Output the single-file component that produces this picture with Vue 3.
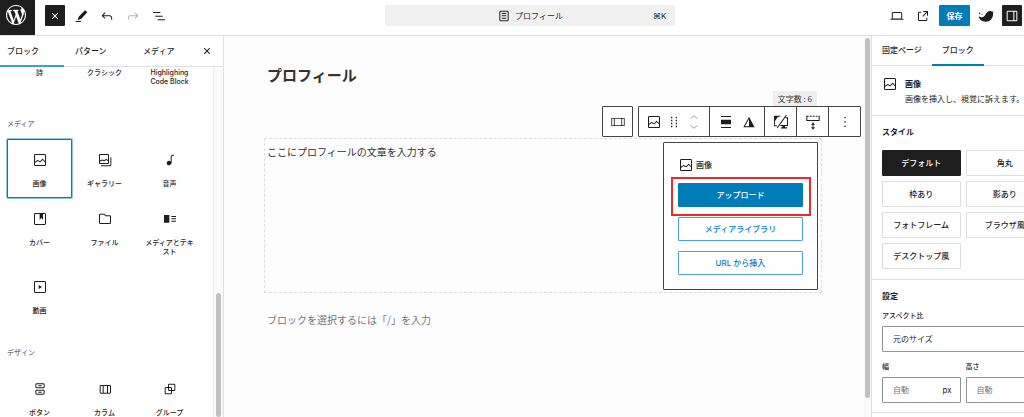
<script setup>
import { h, ref } from "vue";

const icons = {
  close: "M12 13.06l3.712 3.713 1.061-1.06L13.061 12l3.712-3.712-1.06-1.06L12 10.938 8.288 7.227l-1.061 1.06L10.939 12l-3.712 3.712 1.06 1.061L12 13.061z",
  pencil: "M18 3.500l3.500 2.800L12.500 16 7 18.500 8.500 13 18 3.500zM4 19.500h8V21H4v-1.500z",
  undo: "M18.3 11.7c-.6-.6-1.4-.9-2.3-.9H6.7l2.9-3.3-1.1-1-4.5 5L8.5 16l1-1-2.7-2.7H16c.5 0 .9.2 1.3.5 1 1 1 3.4 1 4.5v.3h1.5v-.2c0-1.5 0-4.3-1.5-5.7z",
  redo: "M15.6 6.5l-1.1 1 2.9 3.3H8c-.9 0-1.7.3-2.3.9-1.4 1.5-1.4 4.2-1.4 5.6v.2h1.5v-.3c0-1.1 0-3.5 1-4.5.3-.3.7-.5 1.3-.5h9.2L14.5 15l1.1 1.1 4.6-4.6-4.6-5z",
  listView: "M3 6h11v1.5H3V6Zm3.5 5.5h11V13h-11v-1.5ZM21 17H10v1.5h11V17Z",
  page: "M15.5 7.5h-7V9h7V7.5Zm-7 3.5h7v1.5h-7V11Zm7 3.5h-7V16h7v-1.5Z M17 4H7a2 2 0 0 0-2 2v12a2 2 0 0 0 2 2h10a2 2 0 0 0 2-2V6a2 2 0 0 0-2-2ZM7 5.5h10a.5.5 0 0 1 .5.5v12a.5.5 0 0 1-.5.5H7a.5.5 0 0 1-.5-.5V6a.5.5 0 0 1 .5-.5Z",
  desktop: "M20.5 16h-.7V8c0-1.1-.9-2-2-2H6.2c-1.1 0-2 .9-2 2v8h-.7c-.8 0-1.5.7-1.5 1.5h20c0-.8-.7-1.5-1.5-1.5zM5.7 8c0-.3.2-.5.5-.5h11.6c.3 0 .5.2.5.5v7.6H5.7V8z",
  external: "M19.5 4.5h-7V6h4.44l-5.97 5.97 1.06 1.06L18 7.06v4.44h1.5v-7Zm-13 1a2 2 0 0 0-2 2v10a2 2 0 0 0 2 2h10a2 2 0 0 0 2-2v-3H17v3a.5.5 0 0 1-.5.5h-10a.5.5 0 0 1-.5-.5v-10a.5.5 0 0 1 .5-.5h3V5.5h-3Z",
  bird: "M1.200 8a1.200 1.200 0 1 0 2.400 0a1.200 1.200 0 1 0-2.400 0zM5.200 9.500a.8.8 0 1 0 1.600 0a.8.8 0 1 0-1.600 0zM1 12.500c3 2 6.500 2 8.800-.5C12 9.500 13 5.500 17.500 4.500c1.600-.3 3 .1 4 1l2-.8c-1 1.200-.9 2.300-.9 3.800 0 7-4.600 12-11 12C6 20.500 2 17.500 1 12.500z",
  drawer: "M18 4H6c-1.1 0-2 .9-2 2v12c0 1.1.9 2 2 2h12c1.1 0 2-.9 2-2V6c0-1.1-.9-2-2-2zm-4 14.5H6c-.3 0-.5-.2-.5-.5V6c0-.3.2-.5.5-.5h8v13zm4.500-.5c0 .3-.2.5-.5.5h-2.500v-13H18c.3 0 .5.2.5.5v12z",
  image: "M19 3H5c-1.100 0-2 .9-2 2v14c0 1.100.9 2 2 2h14c1.100 0 2-.9 2-2V5c0-1.100-.9-2-2-2zM5 4.500h14c.3 0 .5.2.5.5v8.400l-3-2.900c-.3-.3-.8-.3-1 0L11.900 14 9 12c-.3-.2-.6-.2-.8 0l-3.600 2.600V5c-.1-.3.1-.5.4-.5zm14 15H5c-.3 0-.5-.2-.5-.5v-2.400l4.100-3 3 1.900c.3.2.7.2.9-.1L16 12l3.500 3.400V19c0 .3-.2.5-.5.5z",
  gallery: "M16.375 4.5H4.625a.125.125 0 0 0-.125.125v8.254l2.859-1.540a.75.75 0 0 1 .68-.016l2.384 1.142 2.890-2.074a.75.75 0 0 1 .874 0l2.313 1.660V4.625a.125.125 0 0 0-.125-.125Zm.125 9.398-2.750-1.975-2.813 2.020a.75.75 0 0 1-.76.067l-2.444-1.170L4.500 14.583v1.792c0 .069.056.125.125.125h11.750a.125.125 0 0 0 .125-.125v-2.477ZM4.625 3C3.728 3 3 3.728 3 4.625v11.750C3 17.273 3.728 18 4.625 18h11.750c.898 0 1.625-.727 1.625-1.625V4.625C18 3.728 17.273 3 16.375 3H4.625ZM20 8v11c0 .69-.31 1-.999 1H6v1.500h13.001c1.520 0 2.499-.982 2.499-2.500V8H20Z",
  audio: "M17.7 4.3c-1.2 0-2.8 0-3.8 1-.6.6-.9 1.500-.9 2.600V14c-.6-.6-1.500-1-2.500-1C8.600 13 7 14.600 7 16.500S8.600 20 10.500 20c1.500 0 2.800-1 3.300-2.300.5-.8.7-1.800.7-2.500V7.900c0-.7.2-1.200.5-1.600.6-.6 1.800-.6 2.800-.6h.3V4.300h-.4z",
  cover: "M18.7 3H5.300C4 3 3 4 3 5.300v13.400C3 20 4 21 5.300 21h13.400c1.300 0 2.300-1 2.300-2.300V5.300C21 4 20 3 18.700 3zm.8 15.700c0 .4-.4.8-.8.8H5.300c-.4 0-.8-.4-.8-.8V5.300c0-.4.4-.8.8-.8h6.200v8.900l2.500-3.100 2.500 3.100V4.500h2.200c.4 0 .8.4.8.8v13.400z",
  file: "M12.848 8a1 1 0 0 1-.914-.594l-.723-1.630a.5.5 0 0 0-.447-.276H5a.5.5 0 0 0-.5.5v11.500a.5.5 0 0 0 .5.5h14a.5.5 0 0 0 .5-.5v-9A.5.5 0 0 0 19 8h-6.152Zm.612-1.500a.5.5 0 0 1-.462-.310l-.445-1.084A2 2 0 0 0 10.763 4H5a2 2 0 0 0-2 2v11.500a2 2 0 0 0 2 2h14a2 2 0 0 0 2-2v-9a2 2 0 0 0-2-2h-5.540Z",
  mediaText: "M3 6v11.500h8V6H3Zm11 3h7V7.500h-7V9Zm7 3.500h-7V11h7v1.500ZM14 16h7v-1.500h-7V16Z",
  video: "M18.7 3H5.300C4 3 3 4 3 5.300v13.400C3 20 4 21 5.300 21h13.400c1.300 0 2.300-1 2.300-2.300V5.300C21 4 20 3 18.700 3zm.8 15.700c0 .4-.4.8-.8.8H5.300c-.4 0-.8-.4-.8-.8V5.300c0-.4.4-.8.8-.8h13.400c.4 0 .8.4.8.8v13.400zM10 15l5-3-5-3v6z",
  buttons: "M14.5 17.5h-5V16h5v1.500zM14.500 8h-5V6.500h5V8zM7 3.500h10a2 2 0 0 1 2 2V9a2 2 0 0 1-2 2H7a2 2 0 0 1-2-2V5.500a2 2 0 0 1 2-2zM17 5H7a.5.5 0 0 0-.5.5V9a.5.5 0 0 0 .5.5h10a.5.5 0 0 0 .5-.5V5.500A.5.5 0 0 0 17 5zM7 13h10a2 2 0 0 1 2 2v3.500a2 2 0 0 1-2 2H7a2 2 0 0 1-2-2V15a2 2 0 0 1 2-2zM17 14.500H7a.5.5 0 0 0-.5.5v3.500a.5.5 0 0 0 .5.5h10a.5.5 0 0 0 .5-.5V15a.5.5 0 0 0-.5-.5z",
  columns: "M15 7.5h-5v10h5v-10Zm1.500 0v10H19a.5.5 0 0 0 .5-.5V8a.5.5 0 0 0-.5-.5h-2.500ZM6 7.500h2.500v10H6a.5.5 0 0 1-.5-.5V8a.5.5 0 0 1 .5-.5ZM6 6h13a2 2 0 0 1 2 2v9a2 2 0 0 1-2 2H6a2 2 0 0 1-2-2V8a2 2 0 0 1 2-2Z",
  column: "M2 6h20v12H2V6zm1.200 1.200v9.600h2.600V7.200H3.200zm3.800 0v9.600h10V7.200H7zm11.200 0v9.600h2.600V7.200h-2.600z",
  group: "M18 4h-7c-1.100 0-2 .9-2 2v3H6c-1.100 0-2 .9-2 2v7c0 1.100.9 2 2 2h7c1.100 0 2-.9 2-2v-3h3c1.100 0 2-.9 2-2V6c0-1.100-.9-2-2-2zm-4.500 14c0 .3-.2.5-.5.5H6c-.3 0-.5-.2-.5-.5v-7c0-.3.2-.5.5-.5h3V13c0 1.100.9 2 2 2h2.500v3zm0-4.500H11c-.3 0-.5-.2-.5-.5v-2.500H13c.3 0 .5.2.5.5v2.500zm5-.5c0 .3-.2.5-.5.5h-3V11c0-1.100-.9-2-2-2h-2.500V6c0-.3.2-.5.5-.5h7c.3 0 .5.2.5.5v7z",
  drag: "M7.500 6.300h2v-2h-2v2zm0 4.500h2v-2h-2v2zm0 4.500h2v-2h-2v2zm0 4.500h2v-2h-2v2zM14.500 4.300v2h2v-2h-2zm0 6.500h2v-2h-2v2zm0 4.500h2v-2h-2v2zm0 4.500h2v-2h-2v2z",
  movers: "M6 6.400L12 2l6 4.400-.9 1.200L12 4 6.900 7.600 6 6.400zM18 17.600L12 22l-6-4.400.9-1.200L12 20l5.100-3.600.9 1.200z",
  align: "M19.500 4.500h-15V3h15v1.500ZM19.500 21h-15v-1.500h15V21ZM4.500 8.500h15v7h-15v-7Z",
  duotone: "M12 4l8.500 16h-17L12 4zm0 3.400V18.500H6L12 7.400z",
  device: "M2 2.500h9V4H7.500L2.800 11v6H6v1.500H1.500V3zM19.500 1l1.300.8L7 21.500l-1.300-.8L19.500 1zM19 5h3.500v13H10.500l1-1.500H21v-10h-3L19 5zM14 18h4v2h3v1.800h-9V20h2v-2z",
  spacer: "M2 2.500h3.500V4H2V2.500zm5 0h3V4H7V2.500zm4.500 0h3V4h-3V2.500zm4.500 0h2.500V4H16V2.500zm4 0h2V4h-2V2.500zM2 4h1.500v5H22V4h-1.500v5H22v1.500H2V4zM12 12.500l3 3.500h-2.300v4H15l-3 3.500L9 20h2.300v-4H9l3-3.500z",
  more: "M13 19.500h-2v-2h2v2zm0-6.500h-2v-2h2v2zm0-6.500h-2v-2h2v2z",
};

const Icon = ({ name }) =>
  h("svg", { class: "icon", viewBox: "0 0 24 24", "aria-hidden": "true" }, [
    h("path", { d: icons[name], "fill-rule": "evenodd" }),
  ]);
Icon.props = ["name"];

const inserterTabs = ["ブロック", "パターン", "メディア"];

const textBlocks = ["詩", "クラシック", "Highlighing Code Block"];

const categories = [
  {
    title: "メディア",
    blocks: [
      { label: "画像", icon: "image" },
      { label: "ギャラリー", icon: "gallery" },
      { label: "音声", icon: "audio" },
      { label: "カバー", icon: "cover" },
      { label: "ファイル", icon: "file" },
      { label: "メディアとテキスト", icon: "mediaText" },
      { label: "動画", icon: "video" },
    ],
  },
  {
    title: "デザイン",
    blocks: [
      { label: "ボタン", icon: "buttons" },
      { label: "カラム", icon: "columns" },
      { label: "グループ", icon: "group" },
    ],
  },
];

const styles = ["デフォルト", "角丸", "枠あり", "影あり", "フォトフレーム", "ブラウザ風", "デスクトップ風"];

const activeTab = ref("ブロック");
const activeBlock = ref("画像");
const activeStyle = ref("デフォルト");
</script>

<template>
  <div class="editor">
    <header class="topbar">
      <a class="logo" href="#" aria-label="WordPress">
        <svg viewBox="0 0 20 20">
          <path d="M20 10c0-5.510-4.490-10-10-10C4.480 0 0 4.490 0 10c0 5.520 4.480 10 10 10 5.510 0 10-4.480 10-10zM7.780 15.370L4.370 6.220c.55-.02 1.170-.08 1.170-.08.5-.06.44-1.130-.06-1.110 0 0-1.450.11-2.370.11-.18 0-.37 0-.58-.01C4.120 2.690 6.870 1.110 10 1.110c2.330 0 4.450.87 6.050 2.340-.68-.11-1.650.39-1.650 1.580 0 .74.45 1.360.9 2.100.35.61.55 1.360.55 2.460 0 1.490-1.400 5-1.400 5l-3.030-8.370c.54-.02.82-.17.82-.17.5-.05.44-1.250-.06-1.220 0 0-1.440.12-2.380.12-.87 0-2.330-.12-2.330-.12-.5-.03-.56 1.200-.06 1.220l.92.08 1.260 3.410zM17.410 10c.24-.64.74-1.870.43-4.250.7 1.290 1.050 2.710 1.050 4.250 0 3.290-1.730 6.240-4.400 7.780.97-2.590 1.940-5.200 2.920-7.780zM6.100 18.090C3.120 16.650 1.110 13.530 1.110 10c0-1.300.23-2.480.72-3.590C3.250 10.300 4.670 14.200 6.100 18.090zm4.030-6.630l2.580 6.980c-.86.29-1.760.45-2.710.45-.79 0-1.570-.11-2.290-.33.81-2.380 1.620-4.740 2.420-7.100z" />
        </svg>
      </a>
      <div class="tools">
        <button class="tool dark" type="button" aria-label="閉じる"><Icon name="close" /></button>
        <button class="tool" type="button" aria-label="編集"><Icon name="pencil" /></button>
        <button class="tool" type="button" aria-label="元に戻す"><Icon name="undo" /></button>
        <button class="tool" type="button" aria-label="やり直す" disabled><Icon name="redo" /></button>
        <button class="tool" type="button" aria-label="リスト表示"><Icon name="listView" /></button>
      </div>
      <button class="command" type="button">
        <span class="doc"><Icon name="page" />プロフィール</span>
        <span class="shortcut">⌘K</span>
      </button>
      <div class="tools end">
        <button class="tool" type="button" aria-label="表示"><Icon name="desktop" /></button>
        <button class="tool" type="button" aria-label="プレビュー"><Icon name="external" /></button>
        <button class="save" type="button">保存</button>
        <button class="tool" type="button" aria-label="テーマ設定"><Icon name="bird" /></button>
        <button class="tool dark" type="button" aria-label="設定"><Icon name="drawer" /></button>
      </div>
    </header>

    <div class="body">
      <aside class="inserter">
        <nav class="inserter-tabs">
          <button
            v-for="tab in inserterTabs"
            :key="tab"
            type="button"
            :class="{ active: tab === activeTab }"
            @click="activeTab = tab"
          >{{ tab }}</button>
          <button class="dismiss" type="button" aria-label="閉じる"><Icon name="close" /></button>
        </nav>
        <div class="inserter-body">
          <div class="block-list">
            <div class="grid">
              <button v-for="label in textBlocks" :key="label" class="block text-only" type="button">{{ label }}</button>
            </div>
            <section v-for="category in categories" :key="category.title">
              <h2>{{ category.title }}</h2>
              <div class="grid">
                <button
                  v-for="block in category.blocks"
                  :key="block.label"
                  class="block"
                  :class="{ selected: block.label === activeBlock }"
                  type="button"
                  @click="activeBlock = block.label"
                >
                  <Icon :name="block.icon" />
                  <span>{{ block.label }}</span>
                </button>
              </div>
            </section>
          </div>
          <div class="track"><div class="thumb"></div></div>
        </div>
      </aside>

      <main class="canvas">
        <h1>プロフィール</h1>
        <div class="columns">
          <p>ここにプロフィールの文章を入力する</p>
          <div class="placeholder">
            <div class="placeholder-label"><Icon name="image" />画像</div>
            <div class="upload"><button class="primary" type="button">アップロード</button></div>
            <button type="button">メディアライブラリ</button>
            <button type="button">URL から挿入</button>
          </div>

          <div class="toolbar">
            <span class="count">文字数 : 6</span>
            <div class="bar">
              <button type="button" aria-label="カラムを選択"><Icon name="column" /></button>
            </div>
            <div class="bar">
              <div class="set wide">
                <button type="button" aria-label="画像"><Icon name="image" /></button>
                <button type="button" aria-label="ドラッグ"><Icon name="drag" /></button>
                <button type="button" aria-label="移動" disabled><Icon name="movers" /></button>
              </div>
              <div class="set">
                <button type="button" aria-label="配置"><Icon name="align" /></button>
                <button type="button" aria-label="デュオトーン"><Icon name="duotone" /></button>
              </div>
              <button type="button" aria-label="デバイス制限"><Icon name="device" /></button>
              <button type="button" aria-label="余白"><Icon name="spacer" /></button>
              <button type="button" aria-label="オプション"><Icon name="more" /></button>
            </div>
          </div>
        </div>
        <p class="appender">ブロックを選択するには「/」を入力</p>
      </main>
      <div class="canvas-track"><div class="thumb"></div></div>

      <aside class="settings">
        <div class="panel">
          <nav class="settings-tabs">
            <button type="button">固定ページ</button>
            <button class="active" type="button">ブロック</button>
          </nav>
          <div class="card">
            <Icon name="image" />
            <div>
              <h2>画像</h2>
              <p>画像を挿入し、視覚に訴えます。</p>
            </div>
          </div>
          <section class="styles">
            <h2>スタイル</h2>
            <div class="pair">
              <button
                v-for="style in styles"
                :key="style"
                type="button"
                :class="{ active: style === activeStyle }"
                @click="activeStyle = style"
              >{{ style }}</button>
            </div>
          </section>
          <section class="dimensions">
            <h2>設定</h2>
            <label for="ratio">アスペクト比</label>
            <select id="ratio">
              <option>元のサイズ</option>
            </select>
            <div class="pair">
              <div>
                <label for="width">幅</label>
                <div class="field"><input id="width" type="text" placeholder="自動" /><span>px</span></div>
              </div>
              <div>
                <label for="height">高さ</label>
                <div class="field"><input id="height" type="text" placeholder="自動" /></div>
              </div>
            </div>
          </section>
        </div>
      </aside>
    </div>
  </div>
</template>

<style>
body {
  margin: 0;
}
</style>

<style scoped>
.editor {
  display: flex;
  flex-direction: column;
  height: 100vh;
  overflow: hidden;
  background: #fff;
  color: #1e1e1e;
  font-family: Inter, "Noto Sans CJK JP", sans-serif;
  font-size: 8px;
  line-height: 10px;
}

.editor * {
  box-sizing: border-box;
}

button,
input,
select {
  margin: 0;
  padding: 0;
  border: 0;
  background: none;
  color: inherit;
  font: inherit;
}

h1,
h2,
p {
  margin: 0;
}

h2 {
  font-size: 8px;
  font-weight: 600;
}

.icon {
  display: block;
  flex: none;
  width: 16px;
  height: 16px;
  fill: currentColor;
}

/* top bar */
.topbar {
  display: grid;
  grid-template-columns: 35px 1fr 290px 1fr;
  align-items: start;
  flex: none;
  height: 36px;
  border-bottom: 1px solid #e0e0e0;
}

.logo {
  height: 35px;
  padding: 5px 6px;
  background: #1e1e1e;
}

.logo svg {
  display: block;
  width: 20px;
  height: 20px;
  fill: #fff;
}

.tools {
  display: flex;
  gap: 6px;
  padding: 5px 2px 0 10px;
}

.tools.end {
  justify-content: flex-end;
}

.tool {
  display: grid;
  place-items: center;
  width: 20px;
  height: 21px;
  border-radius: 1px;
}

.tool:disabled {
  color: #b5b5b5;
}

.tool.dark {
  background: #1e1e1e;
  color: #fff;
}

.save {
  width: 31px;
  height: 21px;
  border-radius: 1px;
  background: #007cba;
  color: #fff;
  font-weight: 600;
}

.command {
  display: grid;
  grid-template-columns: 1fr auto 1fr;
  align-items: center;
  height: 21px;
  margin-top: 5px;
  padding: 0 8px;
  border-radius: 2px;
  background: #f0f0f0;
}

.doc {
  display: flex;
  grid-column: 2;
  align-items: center;
  gap: 3px;
}

.shortcut {
  text-align: right;
}

.body {
  display: flex;
  flex: 1;
  min-height: 0;
}

/* inserter */
.inserter {
  display: flex;
  flex: none;
  flex-direction: column;
  width: 224px;
  border-right: 1px solid #e0e0e0;
}

.inserter-tabs {
  display: flex;
  flex: none;
  gap: 4px;
  height: 31px;
  border-bottom: 1px solid #e0e0e0;
  font-weight: 500;
}

.inserter-tabs button {
  width: 64px;
  height: 31px;
  padding-left: 7px;
  border-bottom: 2px solid transparent;
  text-align: left;
}

.inserter-tabs .active {
  border-color: #3c9dd8;
}

.inserter-tabs .dismiss {
  display: grid;
  place-items: center;
  width: 16px;
  margin-left: -5px;
  padding: 0;
}

.inserter-body {
  display: flex;
  flex: 1;
  min-height: 0;
}

.block-list {
  flex: 1;
  overflow: hidden;
  padding: 1px 11px 0 7px;
}

.block-list h2 {
  margin: 23px 0 11px;
  color: #757575;
  font-size: 7px;
  font-weight: 500;
  line-height: 9px;
}

.grid {
  display: grid;
  grid-template-columns: repeat(3, 1fr);
}

.block {
  display: flex;
  flex-direction: column;
  align-items: center;
  gap: 11px;
  padding: 13px 7px 10px;
  border-radius: 1px;
  font-size: 7px;
  font-weight: 500;
  line-height: 9px;
  text-align: center;
}

.block.text-only {
  display: block;
  align-self: start;
  padding: 0 7px 10px;
}

.block.selected {
  box-shadow: inset 0 0 0 1px #007cba, 0 0 0 1px #8cc4e4;
}

.track {
  width: 10px;
  padding: 226px 2px 0;
  border-left: 1px solid #ececec;
  background: #fafafa;
}

.thumb {
  height: 100%;
  border-radius: 3px;
  background: #c1c1c1;
}

/* canvas */
.canvas {
  flex: 1;
  padding: 27px 42px 0 40px;
  background: #fdfdfd;
  font-family: "Noto Sans CJK JP", sans-serif;
  font-size: 10px;
  line-height: 20px;
}

h1 {
  padding-left: 3px;
  color: #333;
  font-size: 15px;
  line-height: 24px;
}

.columns {
  position: relative;
  display: flex;
  justify-content: space-between;
  margin-top: 51px;
  padding: 3px 3px 2px 2px;
  border: 1px dashed #ddd;
  color: #333;
}

.appender {
  margin-top: 17px;
  padding-left: 3px;
  color: #757575;
}

.placeholder {
  display: flex;
  flex-direction: column;
  gap: 10px;
  width: 155px;
  padding: 14px 14px 14px;
  border: 1px solid #444;
  border-radius: 1px;
  background: #fff;
  color: #1e1e1e;
  font-family: Inter, "Noto Sans CJK JP", sans-serif;
  font-size: 8px;
  font-weight: 500;
  line-height: 10px;
}

.placeholder-label {
  display: flex;
  align-items: center;
  gap: 2px;
  height: 16px;
}

.placeholder button {
  width: 100%;
  height: 24px;
  border: 1px solid #4ba3d3;
  border-radius: 1px;
  color: #007cba;
}

.placeholder .primary {
  display: block;
  border-color: #007cba;
  background: #007cba;
  color: #fff;
}

.upload {
  position: relative;
}

.upload::after {
  content: "";
  position: absolute;
  inset: -6px -8px -9px -7px;
  border: 2px solid #f0282d;
  pointer-events: none;
}

.toolbar {
  position: absolute;
  right: -40px;
  bottom: 100%;
  display: flex;
  gap: 5px;
  margin-bottom: 2px;
  color: #1e1e1e;
}

.count {
  position: absolute;
  right: 44px;
  bottom: 100%;
  padding: 0 5px;
  background: #eee;
  color: #333;
  font-size: 8px;
  line-height: 15px;
  white-space: nowrap;
}

.bar {
  display: flex;
  height: 31px;
  border: 1px solid #444;
  border-radius: 1px;
  background: #fff;
}

.bar > * + * {
  border-left: 1px solid #444;
}

.bar button {
  display: grid;
  place-items: center;
  width: 29px;
}

.bar > button + button,
.bar > .set + button {
  width: 32px;
}

.set {
  display: flex;
  align-items: center;
  justify-content: center;
  width: 55px;
}

.set.wide {
  width: 70px;
}

.set button {
  width: 23px;
}

.set.wide button {
  width: 20px;
}

.bar button:disabled {
  color: #bbb;
}

.canvas-track {
  flex: none;
  width: 7px;
  padding: 2px 1px 19px;
  background: #fafafa;
}

/* settings */
.settings {
  flex: none;
  width: 153px;
  overflow: hidden;
  border-left: 1px solid #ddd;
}

.panel {
  width: 182px;
}

.settings-tabs {
  display: flex;
  height: 30px;
  border-bottom: 1px solid #ddd;
  font-weight: 500;
}

.settings-tabs button {
  height: 30px;
  padding: 0 10px;
  border-bottom: 2px solid transparent;
}

.settings-tabs .active {
  border-color: #007cba;
}

.card {
  display: flex;
  gap: 7px;
  padding: 10px 10px 8px;
  border-bottom: 1px solid #e0e0e0;
  white-space: nowrap;
}

.card h2 {
  line-height: 16px;
}

.card p {
  line-height: 15px;
}

.styles {
  padding: 11px 10px 10px;
  border-bottom: 1px solid #e0e0e0;
}

.styles h2 {
  margin-bottom: 13px;
}

.pair {
  display: grid;
  grid-template-columns: repeat(2, minmax(0, 1fr));
  gap: 5px;
}

.styles button {
  height: 26px;
  border: 1px solid #ddd;
  border-radius: 1px;
  font-weight: 500;
  white-space: nowrap;
}

.styles .active {
  border-color: #1e1e1e;
  background: #1e1e1e;
  color: #fff;
}

.dimensions {
  padding: 11px 10px 9px;
  border-bottom: 1px solid #e0e0e0;
}

.dimensions h2 {
  margin-bottom: 10px;
}

.dimensions label {
  display: block;
  margin-bottom: 5px;
  font-size: 7px;
  font-weight: 500;
}

.dimensions select {
  appearance: none;
  display: block;
  width: 100%;
  height: 26px;
  margin-bottom: 10px;
  padding: 0 10px;
  border: 1px solid #949494;
  border-radius: 1px;
}

.field {
  display: flex;
  align-items: center;
  height: 26px;
  padding: 0 8px 0 10px;
  border: 1px solid #949494;
  border-radius: 1px;
}

.field input {
  flex: 1;
  min-width: 0;
}

.field input::placeholder {
  color: #757575;
}
</style>
